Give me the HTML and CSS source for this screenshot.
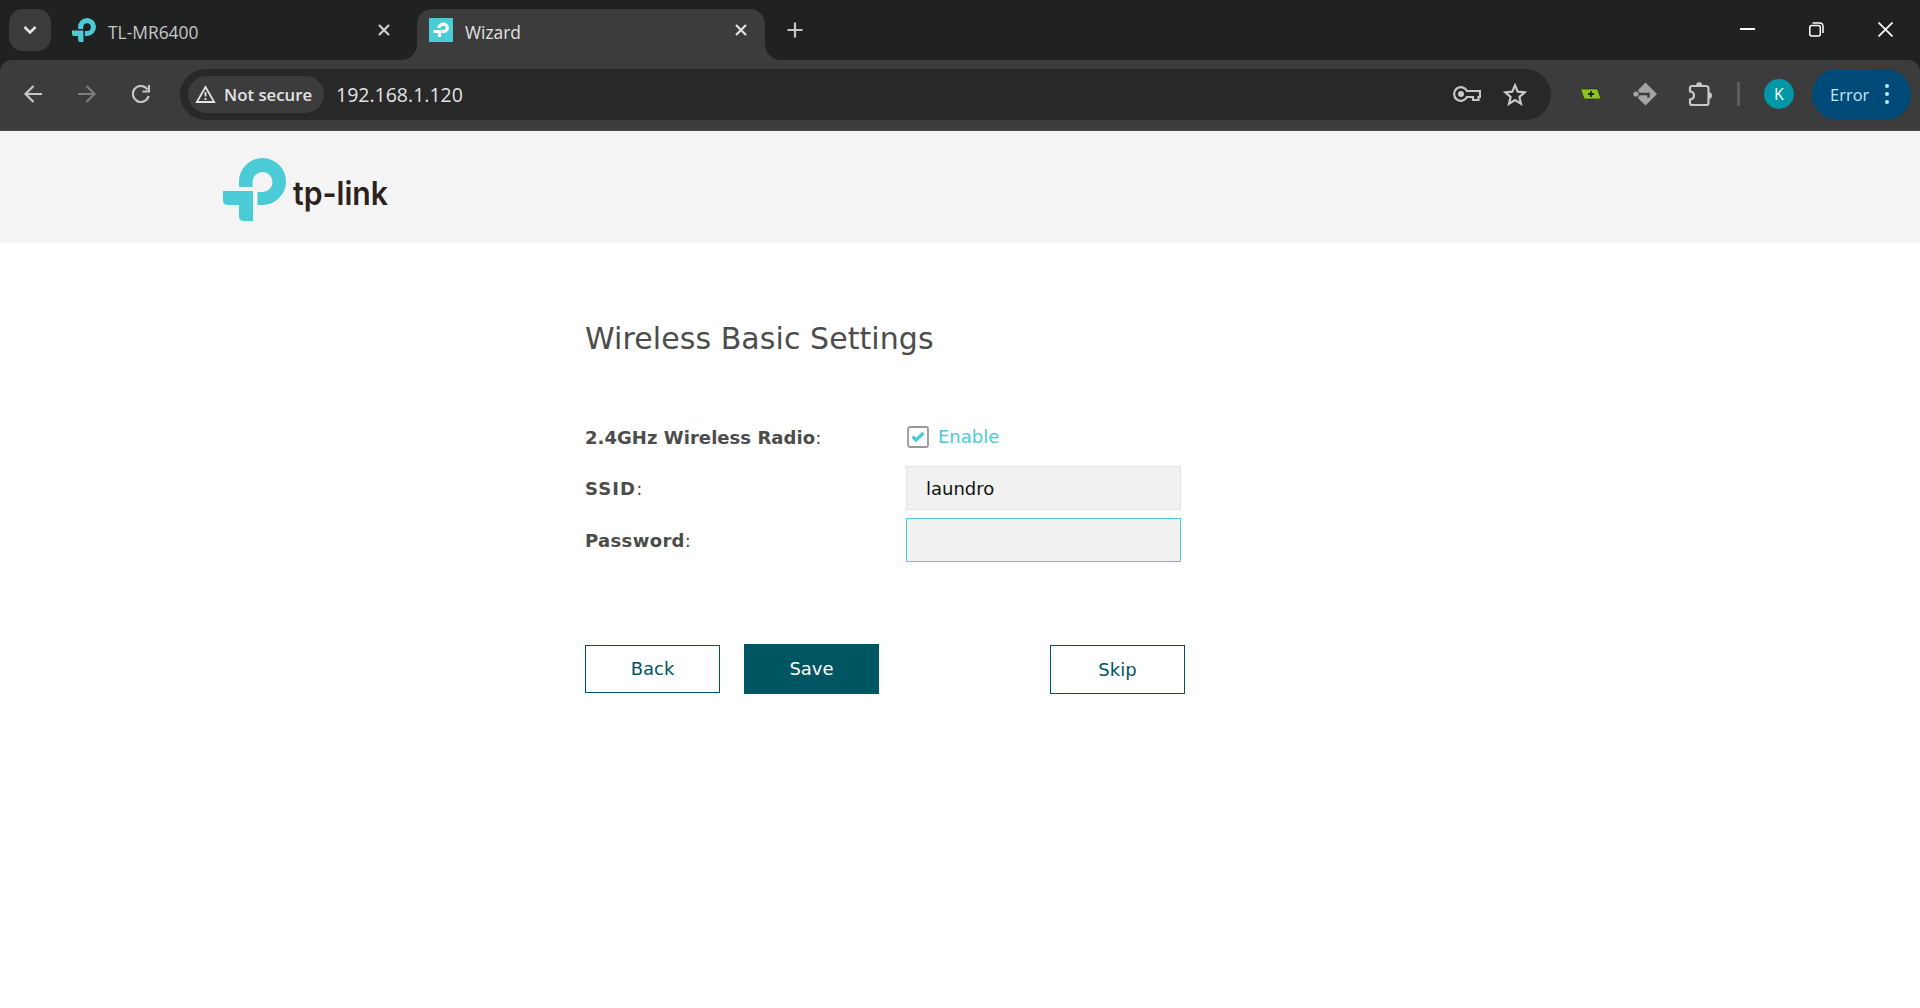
FILE: index.html
```html
<!DOCTYPE html>
<html lang="en">
<head>
    <meta charset="UTF-8">
    <title>Wizard</title>
    <link rel="stylesheet" href="styles.css">
</head>
<body>
    <div class="browser">
        <div class="tab-strip">
            <div class="tab-search">
                <svg width="14" height="10" viewBox="0 0 14 10"><path d="M1.500 2l5.500 5.500L12.500 2" fill="none" stroke="#e3e3e3" stroke-width="2.600"/></svg>
            </div>
            <div class="tab">
                <svg class="favicon" width="24" height="24" viewBox="0 0 63 63">
                    <path d="M16 29V24A23.500 23.500 0 1 1 39.500 47H34V34H39.500A10 10 0 1 0 29.500 24V29Z" fill="#4acbd6"/>
                    <path d="M0 33H30V63H21Q16 63 16 58V47H5Q0 47 0 42Z" fill="#4acbd6"/>
                </svg>
                <span class="tab-title">TL-MR6400</span>
                <svg class="close" width="12" height="12" viewBox="0 0 12 12"><path d="M1 1l10 10M11 1L1 11" stroke="#d0d0d0" stroke-width="2.2"/></svg>
            </div>
            <div class="tab active">
                <svg class="favicon" width="24" height="24" viewBox="0 0 24 24">
                    <rect width="24" height="24" fill="#4acbd6"/>
                    <path d="M10 10A4.200 3.700 0 1 1 14.200 13.500H12.500M4.500 13.500H10.500V19" fill="none" stroke="#fff" stroke-width="3.200"/>
                </svg>
                <span class="tab-title">Wizard</span>
                <svg class="close" width="12" height="12" viewBox="0 0 12 12"><path d="M1 1l10 10M11 1L1 11" stroke="#e3e3e3" stroke-width="2.2"/></svg>
            </div>
            <svg class="new-tab" width="16" height="16" viewBox="0 0 16 16"><path d="M8 .5v15M.5 8h15" stroke="#c7c7c7" stroke-width="2.200"/></svg>
            <div class="window-buttons">
                <svg width="15" height="15" viewBox="0 0 15 15"><path d="M0 7h15" stroke="#fff" stroke-width="2"/></svg>
                <svg width="15" height="15" viewBox="0 0 15 15" fill="none" stroke="#fff" stroke-width="1.500"><rect x=".8" y="3.500" width="10.500" height="10.500" rx="2"/><path d="M3.500 1H10.500Q14 1 14 4.500V11"/></svg>
                <svg width="15" height="15" viewBox="0 0 15 15"><path d="M.5.5l14 14M14.500.5l-14 14" stroke="#fff" stroke-width="1.700"/></svg>
            </div>
        </div>

        <div class="toolbar">
            <div class="nav">
                <svg width="18" height="18" viewBox="0 0 18 18" fill="none" stroke="#c7c7c7" stroke-width="2.200"><path d="M18 9H2M9.500 1L1.500 9l8 8"/></svg>
                <svg width="18" height="18" viewBox="0 0 18 18" fill="none" stroke="#7d7d7d" stroke-width="2.200"><path d="M0 9h16M8.500 1l8 8-8 8"/></svg>
                <svg width="18" height="18" viewBox="0 0 18 18" fill="none" stroke="#c7c7c7" stroke-width="2.200"><path d="M16.600 11A8 8 0 1 1 15.500 4.500M17 0V6.500H10.500"/></svg>
            </div>
            <div class="omnibox">
                <div class="chip">
                    <svg width="21" height="18" viewBox="0 0 21 18"><path d="M10.500 2L19.200 17H1.800Z" fill="none" stroke="#e3e3e3" stroke-width="1.800"/><path d="M10.500 7v4.500M10.500 13v2" stroke="#e3e3e3" stroke-width="1.800"/></svg>
                    <span>Not secure</span>
                </div>
                <span class="url">192.168.1.120</span>
                <svg class="key" width="28" height="16" viewBox="0 0 28 16" fill="none" stroke="#c7c7c7" stroke-width="2.200">
                    <path d="M14 5H27V11H25.500V14H20V11H14A6.800 6.800 0 1 1 14 5Z"/>
                    <circle cx="8" cy="8" r="3" fill="#c7c7c7" stroke="none"/>
                </svg>
                <svg class="star" width="24" height="23" viewBox="0 0 24 23"><path d="M12 2.300l2.700 6.400 7 .6-5.300 4.600 1.600 6.900L12 17.100l-6 3.700 1.600-6.900L2.300 9.300l7-.6Z" fill="none" stroke="#c7c7c7" stroke-width="2.200"/></svg>
            </div>
            <svg class="ext-green" width="22" height="12" viewBox="0 0 22 12"><path d="M.7 1H17.500L21 11H4Z" fill="#8fc31f" stroke="#2c3a10" stroke-width=".8"/><path d="M11 3v6M8 6h6" stroke="#1b2a05" stroke-width="1.800"/></svg>
            <svg class="ext-diamond" width="24" height="24" viewBox="0 0 24 24">
                <path d="M12.500 .5L24 12 12.500 23.500 5 16 7 12 5 8Z" fill="#a3a3a3"/>
                <path d="M5 12H15.500V15.500" fill="none" stroke="#3c3c3c" stroke-width="2.600"/>
                <circle cx="3" cy="12" r="2.600" fill="#a3a3a3"/>
            </svg>
            <svg class="ext-puzzle" width="25" height="26" viewBox="0 0 25 26">
                <path d="M4 5H18Q20.500 5 20.500 7.500V22Q20.500 24 18.500 24H4Q2 24 2 22V18.500Q6 18 6 14.500T2 10.500V7Q2 5 4 5Z" fill="none" stroke="#c7c7c7" stroke-width="2.200"/>
                <path d="M8 5a3.200 3.800 0 0 1 6.400 0ZM20.500 11a3.500 3.500 0 0 1 0 7Z" fill="#c7c7c7"/>
            </svg>
            <div class="separator"></div>
            <div class="avatar">K</div>
            <div class="error">
                <span>Error</span>
                <svg width="4" height="22" viewBox="0 0 4 22" fill="#c2e7ff"><circle cx="2" cy="3" r="2"/><circle cx="2" cy="11" r="2"/><circle cx="2" cy="19" r="2"/></svg>
            </div>
        </div>
    </div>

    <div class="header">
        <svg class="logo" width="180" height="66" viewBox="0 0 180 66">
            <path d="M16 29V24A23.500 23.500 0 1 1 39.500 47H34.500V34H39.500A10 10 0 1 0 29.500 24V29Z" fill="#4acbd6"/>
            <path d="M0 33H30V63H21Q16 63 16 58V47H5Q0 47 0 42Z" fill="#4acbd6"/>
            <text class="wordmark" x="70" y="47" textLength="95" lengthAdjust="spacingAndGlyphs">tp-link</text>
        </svg>
    </div>

    <div class="wizard">
        <h1>Wireless Basic Settings</h1>
        <div class="row radio-row">
            <div class="label"><b>2.4GHz Wireless Radio</b>:</div>
            <div class="checkbox">
                <svg width="22" height="22" viewBox="0 0 22 22"><rect x="1" y="1" width="20" height="20" rx="2" fill="#fff" stroke="#999" stroke-width="1.800"/><path d="M5.500 10.500l3.500 3.500 7.500-7" fill="none" stroke="#4acbd6" stroke-width="3.400"/></svg>
                <span>Enable</span>
            </div>
        </div>
        <div class="row">
            <div class="label ssid"><b>SSID</b>:</div>
            <input class="field" type="text" value="laundro">
        </div>
        <div class="row">
            <div class="label password"><b>Password</b>:</div>
            <input class="field focused" type="text">
        </div>
        <div class="buttons">
            <button class="btn back">Back</button>
            <button class="btn save">Save</button>
            <button class="btn skip">Skip</button>
        </div>
    </div>
</body>
</html>
```
FILE: styles.css
```css
* {
    box-sizing: border-box;
}

body {
    margin: 0;
    background-color: #fff;
    font-family: "DejaVu Sans", Verdana, sans-serif;
    font-size: 18px;
    color: #4c4c4c;
    overflow: hidden;
}

svg {
    display: block;
    flex-shrink: 0;
}

/* browser window */
.browser {
    height: 131px;
    background-color: #202221;
    font-family: "Open Sans", "Noto Sans", sans-serif;
}

.tab-strip {
    display: flex;
    height: 60px;
    padding: 9px 27px 0 9px;
}

.tab-search {
    display: flex;
    align-items: center;
    justify-content: center;
    width: 42px;
    height: 42px;
    border-radius: 14px;
    background-color: #3c3c3c;
}

.tab {
    display: flex;
    position: relative;
    height: 51px;
    width: 348px;
    padding: 9px 18px 0 12px;
    border-radius: 15px 15px 0 0;
}

.tab:not(.active) {
    margin-left: 9px;
}

.active {
    margin-left: 9px;
    background-color: #3c3c3c;
}

/* curved feet of the active tab */
.active::before,
.active::after {
    content: "";
    position: absolute;
    bottom: 0;
    width: 15px;
    height: 15px;
}

.active::before {
    left: -15px;
    background: radial-gradient(circle at 0 0, transparent 14.5px, #3c3c3c 15px);
}

.active::after {
    right: -15px;
    background: radial-gradient(circle at 100% 0, transparent 14.5px, #3c3c3c 15px);
}

.tab-title {
    margin-left: 12px;
    font-size: 17.4px;
    line-height: 28px;
    color: #c7c7c7;
}

.active .tab-title {
    color: #e3e3e3;
}

.close {
    margin-left: auto;
    margin-top: 6px;
}

.new-tab {
    margin: 13px 0 0 22px;
}

.window-buttons {
    display: flex;
    gap: 54px;
    margin: 13px 0 0 auto;
}

.toolbar {
    display: flex;
    align-items: center;
    height: 71px;
    padding: 0 9px 2px 24px;
    border-radius: 12px 12px 0 0;
    border-bottom: 1px solid #4a4a4a;
    background-color: #3c3c3c;
}

.nav {
    display: flex;
    gap: 36px;
}

.omnibox {
    display: flex;
    align-items: center;
    width: 1371px;
    height: 51px;
    margin-left: 30px;
    padding: 0 24px 0 8px;
    border-radius: 26px;
    background-color: #282828;
}

.chip {
    display: flex;
    align-items: center;
    gap: 8px;
    width: 136px;
    height: 37px;
    padding-left: 7px;
    border-radius: 19px;
    background-color: #3c3c3c;
    font-size: 16.8px;
    font-weight: 600;
    color: #e3e3e3;
    white-space: nowrap;
}

.url {
    margin-left: 12px;
    font-size: 19.5px;
    color: #e3e3e3;
}

.key {
    margin-left: auto;
}

.star {
    margin-left: 22px;
}

.ext-green {
    margin-left: 29px;
}

.ext-diamond {
    margin-left: 31px;
}

.ext-puzzle {
    margin-left: 31px;
}

.separator {
    width: 3px;
    height: 24px;
    margin-left: 24px;
    background-color: #5c5c5c;
}

.avatar {
    width: 30px;
    height: 30px;
    margin-left: 24px;
    border-radius: 50%;
    background-color: #0097a7;
    color: #fff;
    font-size: 16px;
    line-height: 30px;
    text-align: center;
}

.error {
    display: flex;
    align-items: center;
    justify-content: space-between;
    width: 99px;
    height: 51px;
    margin-left: 18px;
    padding: 0 22px 0 18px;
    border-radius: 26px;
    background-color: #004a77;
    color: #c2e7ff;
    font-size: 16.5px;
}

/* router page */
.header {
    height: 112px;
    padding: 27px 0 0 223px;
    background-color: #f4f4f4;
}

.logo {
    overflow: visible;
}

.wordmark {
    font-family: Inter, sans-serif;
    font-size: 33px;
    font-weight: 600;
    fill: #2d211e;
}

.wizard {
    width: 600px;
    margin-left: 585px;
    padding-top: 76px;
}

h1 {
    margin: 0;
    font-size: 30px;
    font-weight: normal;
    line-height: 40px;
    letter-spacing: 0.07px;
}

.row {
    display: flex;
    align-items: center;
    height: 44px;
    margin-bottom: 8px;
}

.radio-row {
    height: 22px;
    margin: 67px 0 18px;
}

.label {
    width: 321px;
    letter-spacing: 0.05px;
}

.ssid {
    letter-spacing: 1.1px;
}

.password {
    letter-spacing: 0.35px;
}

.checkbox {
    display: flex;
    align-items: center;
    gap: 9px;
    padding-left: 1px;
    color: #4acbd6;
}

.checkbox span {
    padding-bottom: 2px;
}

.field {
    width: 275px;
    height: 44px;
    padding: 0 19px;
    border: 1px solid #e3e3e3;
    outline: none;
    background-color: #f1f1f1;
    font: inherit;
    color: #111;
}

.focused {
    border-color: #4acbd6;
}

.buttons {
    display: flex;
    margin-top: 82px;
}

.btn {
    width: 135px;
    height: 50px;
    padding: 0;
    border: 1px solid #005562;
    background-color: #fff;
    color: #005562;
    font: inherit;
}

.back {
    height: 48px;
    margin-top: 1px;
    padding-bottom: 2px;
}

.save {
    margin-left: 24px;
    padding-bottom: 2px;
    background-color: #005562;
    color: #fff;
}

.skip {
    height: 49px;
    margin: 1px 0 0 auto;
}
```
